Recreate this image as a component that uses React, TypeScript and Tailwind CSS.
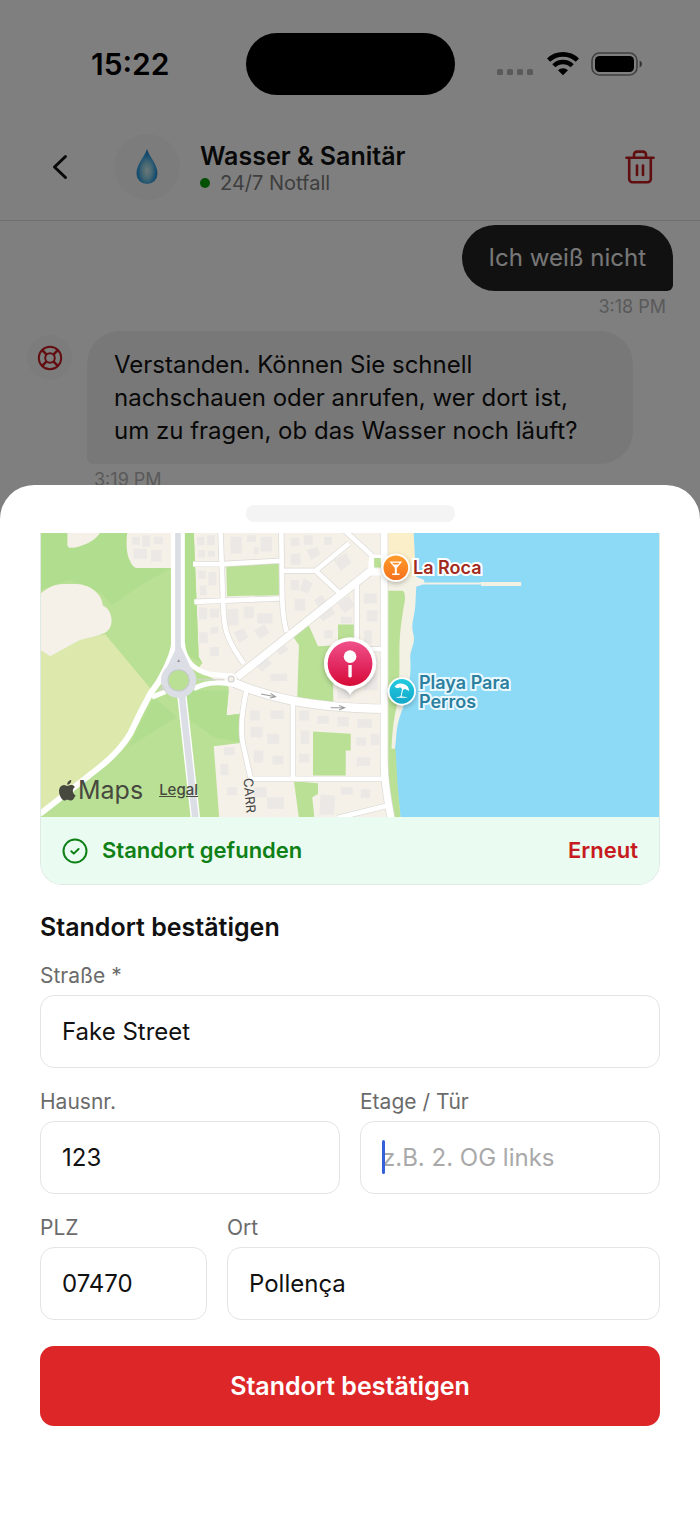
import { useId } from "react";

function StatusBar() {
  return (
    <div className="grid grid-cols-[1fr_auto_1fr] items-center pt-[33px]">
      <time className="pl-[91px] text-[30px] font-semibold leading-[36px] text-black">15:22</time>
      <div className="h-[62px] w-[209px] rounded-full bg-black" />
      <div className="flex items-center justify-end gap-3 pr-[57px]">
        <svg className="mt-4 h-[8px] w-[38px]" viewBox="0 0 38 8" fill="#b4b4b4" aria-hidden="true">
          <rect x="0" y="1" width="6" height="6" rx="1.500" />
          <rect x="10" y="1" width="6" height="6" rx="1.500" />
          <rect x="20" y="1" width="6" height="6" rx="1.500" />
          <rect x="30" y="1" width="6" height="6" rx="1.500" />
        </svg>
        <svg className="h-[24px] w-[32px]" viewBox="0 0 32 24" aria-hidden="true">
          <path d="M1.600 8.200a20.800 20.800 0 0 1 28.800 0" fill="none" stroke="#000" strokeWidth="4.600" />
          <path d="M6.800 13.800a13 13 0 0 1 18.400 0" fill="none" stroke="#000" strokeWidth="4.400" />
          <path d="M11 18.200a7.200 7.200 0 0 1 10 0L16 23.200z" fill="#000" />
        </svg>
        <svg className="h-[24px] w-[52px]" viewBox="0 0 52 24" aria-hidden="true">
          <rect x="1" y="1" width="45" height="22" rx="7.500" fill="none" stroke="#000" strokeOpacity="0.5" strokeWidth="1.600" />
          <rect x="4" y="4" width="39" height="16" rx="4.500" fill="#000" />
          <path d="M48.600 8.600c3.200 1.400 3.200 5.400 0 6.800z" fill="#000" fillOpacity="0.600" />
        </svg>
      </div>
    </div>
  );
}

function DropIcon() {
  const id = useId();
  return (
    <svg className="h-[38px] w-[24px]" viewBox="0 0 24 38" aria-hidden="true">
      <defs>
        <radialGradient id={id} cx="0.5" cy="0.62" r="0.58">
          <stop offset="0" stopColor="#d4eef2" />
          <stop offset="0.4" stopColor="#8ccfe6" />
          <stop offset="0.75" stopColor="#2a9be0" />
          <stop offset="1" stopColor="#1a78c0" />
        </radialGradient>
      </defs>
      <path d="M12 1c2 7.600 10.500 15 10.500 24.500a10.500 10.500 0 0 1-21 0C1.500 16 10 8.600 12 1z" fill={`url(#${id})`} />
    </svg>
  );
}

function Header() {
  return (
    <header className="mt-[19px] flex items-center border-b border-[#dcdcdc] pb-[20px] pl-[48px] pr-[44px] pt-[20px]">
      <button aria-label="Zurück" className="flex h-[34px] w-[24px] items-center justify-center">
        <svg className="h-[26px] w-[16px]" viewBox="0 0 16 26" fill="none" stroke="#111" strokeWidth="3" strokeLinecap="round" strokeLinejoin="round">
          <path d="M13.500 2.500 2.500 13l11 10.500" />
        </svg>
      </button>
      <div className="ml-[42px] flex h-[66px] w-[66px] items-center justify-center rounded-full bg-[#f8f8f8]">
        <DropIcon />
      </div>
      <div className="ml-[20px] grow pt-[3px]">
        <h1 className="text-[25px] font-semibold leading-[28px] text-[#111]">Wasser &amp; Sanitär</h1>
        <p className="flex items-center gap-[10px] text-[20px] leading-[26px] text-[#7d7d7d]">
          <span className="size-[10px] rounded-full bg-[#08a008]" />
          24/7 Notfall
        </p>
      </div>
      <button aria-label="Chat löschen" className="h-[36px] w-[32px]">
        <svg className="h-[36px] w-[32px]" viewBox="0 0 32 36" fill="none" stroke="#c01c20" strokeWidth="2.600" strokeLinecap="round" strokeLinejoin="round">
          <path d="M2.500 8.800h27M5.200 8.800v21.200a3.200 3.200 0 0 0 3.200 3.200h15.200a3.200 3.200 0 0 0 3.200-3.200V8.800M10 8.800V5.600A3 3 0 0 1 13 2.600h6a3 3 0 0 1 3 3V8.800M13 16.500v9.500M19 16.500v9.500" />
        </svg>
      </button>
    </header>
  );
}

function LifebuoyIcon() {
  return (
    <svg className="size-[26px]" viewBox="0 0 26 26" fill="none" stroke="#c41c22" strokeWidth="2" aria-hidden="true">
      <circle cx="13" cy="13" r="11.200" />
      <circle cx="13" cy="13" r="4.800" />
      <path d="M5.200 5.200l4.400 4.400M20.800 5.200l-4.400 4.400M5.200 20.800l4.400-4.400M20.800 20.800l-4.400-4.400" strokeWidth="2.600" />
    </svg>
  );
}

function Chat() {
  return (
    <main className="flex flex-col px-[27px] pt-[4px]">
      <div className="flex flex-col items-end">
        <p className="rounded-[33px] rounded-br-[6px] bg-[#222] px-[27px] py-[16px] text-[24px] leading-[34px] text-[#eee]">Ich weiß nicht</p>
        <time className="mr-[7px] mt-[4px] text-[18px] leading-[24px] text-[#b4b4b4]">3:18 PM</time>
      </div>
      <div className="mt-[12px] flex items-start gap-[15px]">
        <div className="mt-[4px] flex size-[45px] items-center justify-center rounded-full bg-[#f8f8f8]">
          <LifebuoyIcon />
        </div>
        <div>
          <p className="max-w-[546px] rounded-[33px] rounded-bl-[6px] bg-[#f0f0f0] px-[27px] py-[17px] text-[24px] leading-[33px] text-[#111]">
            Verstanden. Können Sie schnell nachschauen oder anrufen, wer dort ist, um zu fragen, ob das Wasser noch läuft?
          </p>
          <time className="ml-[7px] mt-[4px] block text-[18px] leading-[24px] text-[#b4b4b4]">3:19 PM</time>
        </div>
      </div>
    </main>
  );
}

const buildings = [
  "M470 20h22v26h-22zM500 16h24v30h-24zM474 60h20v22h-20zM502 62h22v18h-22z",
  "M474 122h22v24h-22zM504 126h24v40h-24zM478 166h20v30h-20zM476 232h24v36h-24zM508 236h28v26h-28z",
  "M476 306h26v32h-26zM510 290h24v20h-24zM508 350h28v28h-28zM560 236h34v50h-34zM610 230h30v34h-30zM580 306l30-12 14 28-28 16z",
  "M570 20h34v50h-34zM620 16h26v20h-26zM660 20h34v44h-34zM640 52h14v20h-14zM650 250h46v30h-46zM640 300l32-18 14 26-28 18z",
  "M750 24h26v24h-26zM790 16h26v28h-26zM750 70h30v34h-30zM850 20h24v24h-24zM798 60l30-10 12 22-28 18zM880 90l36-22 16 30-32 24z",
  "M750 150h26v30h-26zM790 144l26 16-14 30-24-10zM762 206h32v36h-32zM820 210l24-16 16 24-24 16z",
  "M830 250l40-26 14 26-38 24zM890 220l34-24 18 30-30 24zM850 300h26v24h-26zM900 260h34v20h-34z",
  "M970 190h38v30h-38zM978 240h32v34h-32zM970 300h24v40h-24zM980 380h28v26h-28zM970 430h40v50h-40zM890 480h40v24h-40z",
  "M640 400l34-28 20 28-30 24zM700 350l24-18 20 26-26 18zM690 430h50v22h-50zM628 540h30v30h-30zM690 540h40v26h-40z",
  "M630 590h36v30h-36zM680 610h36v30h-36zM640 660h28v36h-28zM696 676h32v26h-32zM776 540h30v30h-30zM780 600h26v40h-26zM776 670h30v26h-30z",
  "M830 556h34v24h-34zM890 560h34v28h-34zM950 566h44v26h-44zM946 620h30v26h-30zM990 610h26v34h-26zM948 680h40v26h-40z",
  "M550 650h32v24h-32zM540 700h24v34h-24zM560 770h30v24h-30zM640 770h38v30h-38zM680 800h50v34h-50zM840 790l44 6-4 56h-44z",
  "M900 770h36v22h-36zM960 776h28v26h-28zM275 20h24v24h-24zM306 16h24v34h-24zM340 20h28v22h-28zM280 56h40v30h-40zM332 60h32v34h-32z",
].join("");

const streets =
  "M540 0L548 215Q549 290 565 325T610 400M458 102H545L720 92M462 215L717 205M722 0L725 200Q726 260 738 305M730 122H825L925 40M825 122L895 187M910 0L995 78M948 165V400M950 357H1030M618 480C600 560 600 620 612 660L630 742 M757 505V745M625 745H1030M890 862L1040 825";

function MapDrawing() {
  const id = useId();
  return (
    <svg className="absolute inset-0 h-full w-full" viewBox="3 9 1855 850" preserveAspectRatio="xMinYMin slice" aria-hidden="true">
      <defs>
        <linearGradient id={`${id}red`} x1="0" y1="0" x2="0" y2="1">
          <stop offset="0" stopColor="#f0508a" />
          <stop offset="0.6" stopColor="#e0255c" />
          <stop offset="1" stopColor="#d60b35" />
        </linearGradient>
        <linearGradient id={`${id}orange`} x1="0" y1="0" x2="0" y2="1">
          <stop offset="0" stopColor="#ff9d2b" />
          <stop offset="1" stopColor="#f4701c" />
        </linearGradient>
        <linearGradient id={`${id}teal`} x1="0" y1="0" x2="0" y2="1">
          <stop offset="0" stopColor="#24cbe0" />
          <stop offset="1" stopColor="#12a8c9" />
        </linearGradient>
        <filter id={`${id}shadow`} x="-40%" y="-40%" width="180%" height="180%">
          <feDropShadow dx="0" dy="6" stdDeviation="8" floodColor="#000" floodOpacity="0.25" />
        </filter>
      </defs>
      <path d="M0 0H1900V900H0z" fill="#f5f1e8" />

      <path d="M0 0H460L468 200 475 380 486 398 470 420 565 470 558 555 600 550 606 637 520 647 537 870H0z" fill="#bae096" />
      <path d="M0 0H395V114L310 160 215 225 185 190 90 150 0 180zM432 0H460L468 200 475 380 486 398 432 370zM480 480H565L558 555 600 550 606 637 520 620 450 570 430 480zM410 560L340 500 265 650z" fill="#b1de8e" />
      <path d="M0 355L30 378 130 325 195 312 335 480 265 620 190 700 0 850z" fill="#dce8ac" />
      <path d="M0 192C40 155 70 162 110 162 150 164 185 190 188 226 215 238 220 275 208 295 195 318 150 318 115 332 80 350 50 368 30 378L0 358z" fill="#f5f1e8" />
      <path d="M82 0H185Q170 30 130 45 84 62 82 45zM262 0Q254 60 268 90 278 114 290 114H400V0z" fill="#f5f1e8" />
      <path d="M557 98L715 93V195L560 198z" fill="#bae096" />
      <path d="M755 315L800 275 832 348 892 345V283H948V350H876L878 518 770 500 775 345zM817 603L930 610V660H915V735H817zM760 752L832 758V790L815 800 822 870H776z" fill="#bae096" />
      <path d={buildings} fill="#ebe8e6" />

      <path d="M1040 0H1118L1122 90 1125 180H1040z" fill="#faefc9" />
      <path d="M1040 140H1130V700H1040z" fill="#f3f0e4" />
      <path d="M1118 0L1122 80 1126 140 1150 150V162L1126 170 1124 215C1122 260 1110 280 1116 305 1126 340 1110 350 1108 380 1112 430 1104 470 1094 510 1080 550 1068 575 1066 620L1062 660 1068 760 1080 870H1900V0z" fill="#8cdaf6" />
      <path d="M1042 182H1085Q1094 186 1092 210C1080 280 1074 320 1076 400L1074 500C1060 560 1056 580 1052 655H1064L1070 760 1080 870H1050L1042 740z" fill="#bae096" />
      <path d="M1146 160H1325" stroke="#f3f0e4" strokeWidth="6" />
      <path d="M1320 162H1440" stroke="#f3f0e4" strokeWidth="12" />

      <g fill="none" stroke="#dcdad6">
        <path d={streets} strokeWidth="18" />
        <path d="M590 440L990 122" strokeWidth="27" />
        <path d="M575 455C680 500 800 532 1035 535" strokeWidth="29" />
        <path d="M1030 0V690Q1030 760 1052 870" strokeWidth="25" />
      </g>
      <g fill="none" stroke="#fff">
        <path d={streets} strokeWidth="14" />
        <path d="M590 440L990 122" strokeWidth="23" />
        <path d="M575 455C680 500 800 532 1035 535" strokeWidth="25" />
        <path d="M1030 0V690Q1030 760 1052 870" strokeWidth="21" />
        <path d="M1030 85H995Q990 105 995 126H1030" strokeWidth="20" />
        <path d="M401 0V345Q395 385 355 455L330 490Q300 545 270 610 240 660 185 705L0 850" strokeWidth="18" />
        <path d="M426 0V335Q432 415 510 432L575 438M460 475Q510 448 580 462M375 484L335 500" strokeWidth="15" />
      </g>
      <path d="M1000 84H1020V112H1000z" fill="#bae096" />
      <path d="M413 0V360" stroke="#dcdee6" strokeWidth="17" />
      <path d="M412 345L370 430 365 455H465L455 420 420 345z" fill="#dcdee6" />
      <path d="M424 490L466 870" stroke="#fff" strokeWidth="28" />
      <path d="M424 490L466 870" stroke="#dcdee6" strokeWidth="20" />
      <circle cx="415" cy="450" r="42" fill="#bae096" stroke="#dcdee6" strokeWidth="22" />
      <circle cx="415" cy="450" r="32" fill="none" stroke="#c5c8ca" strokeWidth="3" />
      <path d="M410 395l5-9 5 9z" fill="#999" />
      <circle cx="572" cy="446" r="17" fill="#fff" />
      <circle cx="572" cy="446" r="9" fill="#f5f1e8" stroke="#ccc" strokeWidth="3" />
      <path d="M470 448H550M358 478h16l-6-12z" fill="none" stroke="#d2d2d2" strokeWidth="3" />
      <path d="M662 491L704 499M690 489L705 499 688 503M870 532H912M895 525L912 532 895 539" fill="none" stroke="#999" strokeWidth="3" />

      <g filter={`url(#${id}shadow)`}>
        <path d="M928 494Q921 477 901 472A78 78 0 1 1 955 472Q935 477 928 494z" fill="#fff" />
      </g>
      <circle cx="928" cy="400" r="67" fill={`url(#${id}red)`} />
      <circle cx="928" cy="379" r="19" fill="#fff" />
      <path d="M923 404h10v34q-5 8-10 0z" fill="#fff" />

      <g filter={`url(#${id}shadow)`}>
        <circle cx="1065" cy="113" r="42" fill="#fff" />
        <circle cx="1083" cy="483" r="42" fill="#fff" />
      </g>
      <circle cx="1065" cy="113" r="37" fill={`url(#${id}orange)`} />
      <path d="M1046 94H1084L1068 114V130H1076V135H1054V130H1062V114zM1054 98L1058 103H1072L1076 98z" fill="#fff" fillRule="evenodd" />
      <circle cx="1083" cy="483" r="37" fill={`url(#${id}teal)`} />
      <path d="M1061 470Q1068 456 1086 460 1104 464 1105 482L1093 476 1086 478 1078 471 1071 474zM1084 474l3 1-5 24h-3zM1064 502Q1082 494 1101 502z" fill="#fff" />
    </svg>
  );
}

function AppleLogo() {
  return (
    <svg className="h-[21px] w-[17px]" viewBox="0 0 170 210" fill="#47493f" aria-hidden="true">
      <path d="M138 108c0-25 21-37 22-38-12-17-30-20-37-20-16-2-31 9-39 9s-20-9-33-9C34 50 18 60 9 75c-18 32-5 79 13 105 9 12 19 26 32 26 13-1 18-8 33-8s20 8 33 8c14 0 23-13 31-25 10-14 14-28 14-29-1 0-27-11-27-44zM112 33c7-9 12-20 10-32-10 0-22 7-29 15-6 7-12 19-10 31 11 1 22-6 29-14z" />
    </svg>
  );
}

function LocationMap() {
  return (
    <div className="relative h-[284px] overflow-hidden">
      <MapDrawing />
      <p className="absolute left-[372px] top-[23px] text-[18px] font-semibold leading-[24px] text-[#a12a1e] [paint-order:stroke_fill] [-webkit-text-stroke:4px_#fff]">La Roca</p>
      <p className="absolute left-[378px] top-[140px] w-[110px] text-[18px] font-semibold leading-[19px] text-[#2b7f9f] [paint-order:stroke_fill] [-webkit-text-stroke:4px_#e8f8fe]">Playa Para Perros</p>
      <p className="absolute left-[201px] top-[245px] -rotate-[5deg] text-[13px] leading-[16px] text-[#444] [writing-mode:vertical-rl]">CARR</p>
      <div className="absolute bottom-[12px] left-[18px] flex items-center text-[#47493f]">
        <AppleLogo />
        <span className="ml-[2px] text-[25px] leading-[30px]">Maps</span>
        <a href="#legal" className="ml-[16px] text-[15px] font-medium underline">Legal</a>
      </div>
    </div>
  );
}

function Field({ id, label, value, placeholder, className = "" }: { id: string; label: string; value?: string; placeholder?: string; className?: string }) {
  return (
    <div className={`flex min-w-0 flex-col gap-[6px] ${className}`}>
      <label htmlFor={id} className="text-[21px] leading-[26px] text-[#6b6b6b]">{label}</label>
      <div className="relative flex">
        <input
          id={id}
          defaultValue={value}
          placeholder={placeholder}
          className="h-[73px] w-full rounded-[14px] border border-[#e4e4e4] bg-white px-[21px] text-[24px] text-[#111] outline-none placeholder:text-[#a9a9a9]"
        />
        {placeholder && <span className="absolute left-[22px] top-[19px] h-[34px] w-[3px] rounded-full bg-[#3560d8]" />}
      </div>
    </div>
  );
}

function LocationSheet() {
  return (
    <section aria-label="Standort bestätigen" className="rounded-t-[34px] bg-white px-[40px] pb-[94px] pt-[20px]">
      <div className="mx-auto h-[17px] w-[209px] rounded-[8px] bg-[#f4f4f4]" />
      <div className="mt-[11px] overflow-hidden rounded-b-[22px] border-x border-b border-[#dfeae4]">
        <LocationMap />
        <div className="flex h-[67px] items-center justify-between bg-[#eafcf2] px-[21px]">
          <p className="flex items-center gap-[14px] text-[22px] font-semibold text-[#0f8015]">
            <svg className="size-[26px]" viewBox="0 0 26 26" fill="none" stroke="#0f8015" strokeWidth="2" strokeLinecap="round" strokeLinejoin="round" aria-hidden="true">
              <circle cx="13" cy="13" r="11.500" />
              <path d="M9.300 13.200l2.500 2.400 4.800-4.600" />
            </svg>
            Standort gefunden
          </p>
          <button className="text-[22px] font-semibold text-[#c61a20]">Erneut</button>
        </div>
      </div>
      <form onSubmit={(event) => event.preventDefault()}>
        <h2 className="mt-[26px] text-[25px] font-semibold leading-[32px] text-[#111]">Standort bestätigen</h2>
        <div className="mt-[20px] flex flex-col gap-[21px]">
          <Field id="street" label="Straße *" value="Fake Street" />
          <div className="flex gap-[20px]">
            <Field id="number" label="Hausnr." value="123" className="flex-1" />
            <Field id="floor" label="Etage / Tür" placeholder="z.B. 2. OG links" className="flex-1" />
          </div>
          <div className="flex gap-[20px]">
            <Field id="zip" label="PLZ" value="07470" className="w-[167px]" />
            <Field id="city" label="Ort" value="Pollença" className="grow" />
          </div>
        </div>
        <button className="mt-[26px] h-[80px] w-full rounded-[14px] bg-[#dd2627] pt-[2px] text-[25px] font-semibold text-white">Standort bestätigen</button>
      </form>
    </section>
  );
}

export default function App() {
  return (
    <div className="grid min-h-screen grid-cols-1 bg-white font-['Inter',sans-serif]">
      <div className="col-start-1 row-start-1">
        <StatusBar />
        <Header />
        <Chat />
      </div>
      <div className="col-start-1 row-start-1 flex flex-col justify-end bg-black/50">
        <LocationSheet />
      </div>
    </div>
  );
}
